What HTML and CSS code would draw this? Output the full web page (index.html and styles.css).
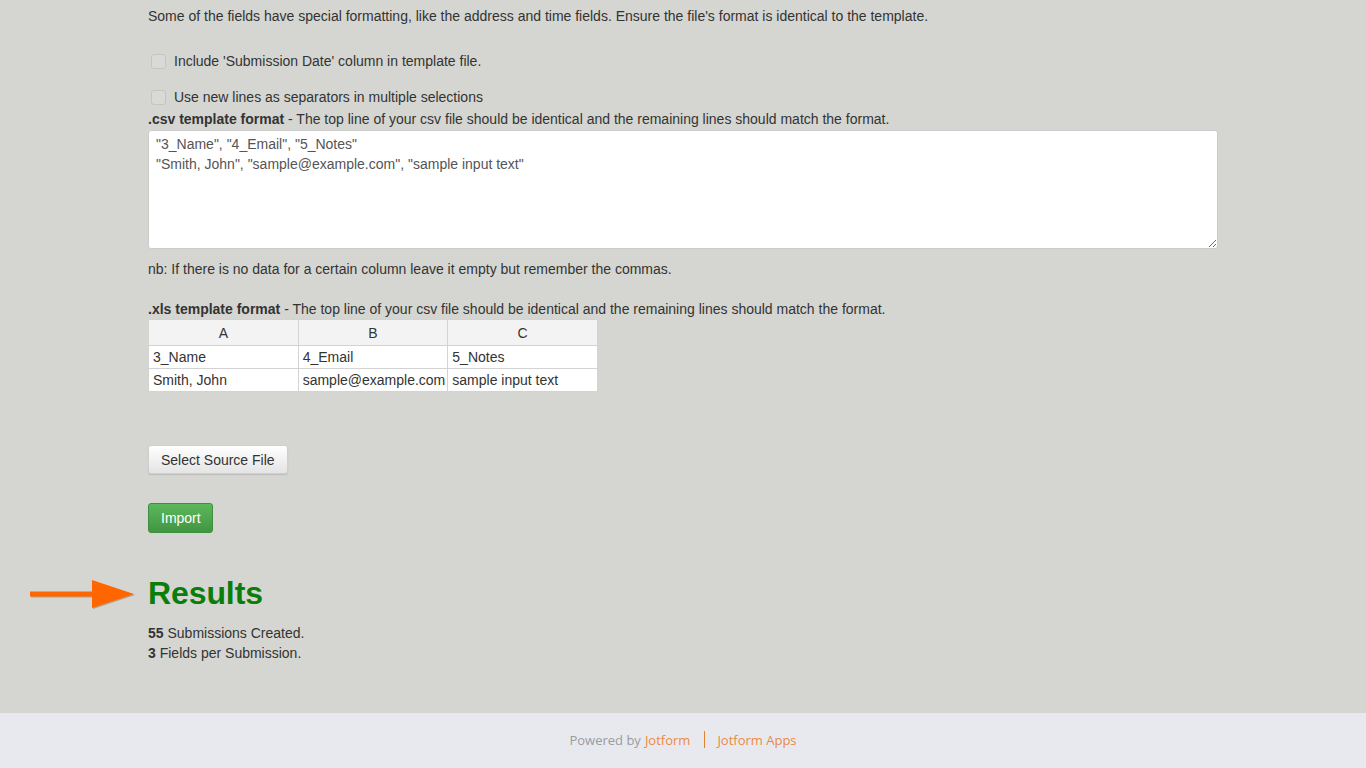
FILE: index.html
```html
<!DOCTYPE html>
<html lang="en">
<head>
    <meta charset="UTF-8">
    <title>Import Submissions</title>
    <link rel="stylesheet" href="styles.css">
</head>
<body>
<div id="main">
    <p class="intro">Some of the fields have special formatting, like the address and time fields. Ensure the file's format is identical to the template.</p>

    <label class="check-row first"><span class="box"></span>Include 'Submission Date' column in template file.</label>
    <label class="check-row"><span class="box"></span>Use new lines as separators in multiple selections</label>

    <p class="label"><b>.csv template format</b> - The top line of your csv file should be identical and the remaining lines should match the format.</p>
    <textarea class="csv-box">"3_Name", "4_Email", "5_Notes"
"Smith, John", "sample@example.com", "sample input text"</textarea>

    <p class="nb">nb: If there is no data for a certain column leave it empty but remember the commas.</p>

    <p class="label xls-label"><b>.xls template format</b> - The top line of your csv file should be identical and the remaining lines should match the format.</p>
    <table class="xls">
        <tr class="head"><td>A</td><td>B</td><td>C</td></tr>
        <tr><td>3_Name</td><td>4_Email</td><td>5_Notes</td></tr>
        <tr><td>Smith, John</td><td>sample@example.com</td><td>sample input text</td></tr>
    </table>

    <div class="actions">
        <button class="btn btn-default">Select Source File</button>
        <button class="btn btn-success">Import</button>
    </div>

    <div class="results">
        <h2>
            <svg class="arrow" width="106" height="32" viewBox="0 0 106 32">
                <path d="M0 13.5 H62 V2 L104 16 L62 30 V18.5 H0 Z" fill="#ff6600"/>
            </svg>
            Results
        </h2>
        <p><b>55</b> Submissions Created.</p>
        <p><b>3</b> Fields per Submission.</p>
    </div>
</div>

<div id="footer">
    <span class="grey">Powered by</span> <a href="#">Jotform</a>
    <span class="sep"></span>
    <a href="#">Jotform Apps</a>
</div>
</body>
</html>
```

FILE: styles.css
```css
*{
    padding: 0;
    margin: 0;
    box-sizing: border-box;
}
body{
    background: #d5d6d1;
    font-family: "Liberation Sans", Arial, sans-serif;
    font-size: 14px;
    line-height: 20px;
    color: #333333;
}
#main{
    padding: 6px 0 50px 148px;
    width: 1218px;
}
.check-row{
    display: flex;
    align-items: center;
    margin-top: 16px;
    height: 20px;
    cursor: pointer;
}
.check-row.first{
    margin-top: 25px;
}
.check-row .box{
    width: 15px;
    height: 15px;
    margin: 1px 8px 0 3px;
    border: 1px solid #c4c5c1;
    border-radius: 3px;
    background: #d9dad6;
}
.label{
    margin-top: 2px;
}
.csv-box{
    display: block;
    width: 1070px;
    height: 119px;
    margin-top: 1px;
    padding: 3px 7px;
    border: 1px solid #cccccc;
    border-radius: 3px;
    background: #ffffff;
    font-family: inherit;
    font-size: 14px;
    line-height: 20px;
    color: #555555;
}
.nb{
    margin-top: 10px;
}
.xls-label{
    margin-top: 20px;
}
.xls{
    width: 450px;
    table-layout: fixed;
    border-collapse: collapse;
    background: #ffffff;
}
.xls td{
    height: 23px;
    padding: 0 4px;
    border: 1px solid #d3d3d3;
    line-height: 20px;
    white-space: nowrap;
    overflow: hidden;
}
.xls .head td{
    height: 26px;
    background: #f3f3f3;
    text-align: center;
}
.actions{
    display: flex;
    flex-direction: column;
    align-items: flex-start;
    gap: 29px;
    margin-top: 53px;
}
.btn{
    height: 29px;
    padding: 0 12px;
    border-radius: 3px;
    font-family: inherit;
    font-size: 14px;
    white-space: nowrap;
    cursor: pointer;
}
.btn-default{
    color: #333333;
    border: 1px solid #cfcfcf;
    background: linear-gradient(#ffffff, #e4e4e4);
    box-shadow: 0 1px 1px rgba(0,0,0,0.12);
}
.btn-success{
    width: 65px;
    height: 30px;
    color: #ffffff;
    border: 1px solid #3e8f3e;
    background: linear-gradient(#5cb85c, #419641);
}
.results{
    margin-top: 42px;
}
.results h2{
    position: relative;
    font-size: 32px;
    line-height: 36px;
    letter-spacing: -0.1px;
    color: #0a7d0a;
}
.arrow{
    position: absolute;
    left: -118px;
    top: 3px;
    filter: drop-shadow(1px 1px 0 rgba(120,60,0,0.35));
}
.results h2 + p{
    margin-top: 12px;
}
#footer{
    height: 55px;
    background: #e8e9ee;
    display: flex;
    justify-content: center;
    align-items: center;
    padding-bottom: 2px;
    font-family: "Open Sans", sans-serif;
    font-size: 13px;
    color: #999ba1;
}
#footer a{
    color: #ea8a45;
    text-decoration: none;
}
#footer .grey{
    margin-right: 4px;
}
#footer .sep{
    width: 1px;
    height: 17px;
    margin: 0 12px 0 14px;
    background: #e5822b;
}
```
